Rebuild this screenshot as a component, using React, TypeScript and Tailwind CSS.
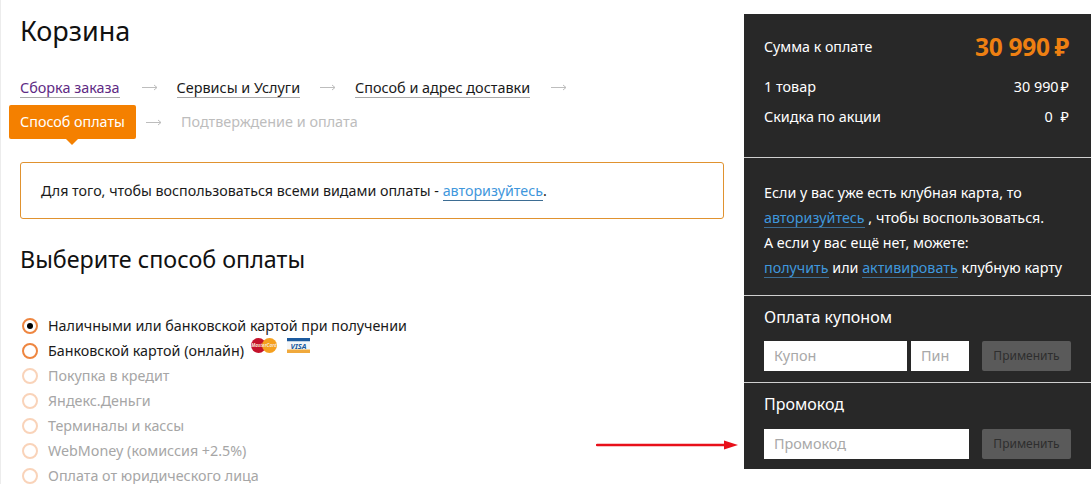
import { FC } from 'react';
import clsx from 'clsx';

const FONT = "font-['Noto_Sans',sans-serif]";

const methods = [
  { label: 'Наличными или банковской картой при получении', active: true, checked: true },
  { label: 'Банковской картой (онлайн)', active: true, cards: true },
  { label: 'Покупка в кредит' },
  { label: 'Яндекс.Деньги' },
  { label: 'Терминалы и кассы' },
  { label: 'WebMoney (комиссия +2.5%)' },
  { label: 'Оплата от юридического лица' },
];

const StepArrow: FC<{ className?: string }> = ({ className }) => (
  <svg width="16" height="7" viewBox="0 0 16 7" fill="none" className={clsx('shrink-0', className)}>
    <path d="M0 3.5H15M12 1l3 2.5L12 6" stroke="#bdbdbd" strokeWidth="1" />
  </svg>
);

const Step: FC<{ label: string; className?: string }> = ({ label, className }) => (
  <a className={clsx('border-b border-[#a9a9a9] text-[14.4px] leading-[19px]', className)}>{label}</a>
);

const Cards = () => (
  <span className="ml-[7px] flex items-start gap-[10px] self-start">
    <svg width="26" height="15" viewBox="0 0 26 15">
      <circle cx="7.5" cy="7.5" r="7.5" fill="#c4122b" />
      <circle cx="18.5" cy="7.5" r="7.5" fill="#f5a01f" />
      <text x="13" y="9.2" textAnchor="middle" fontSize="4.6" fontStyle="italic" fontWeight="700" fill="#f6e3d2">
        MasterCard
      </text>
    </svg>
    <svg width="23" height="15" viewBox="0 0 23 15">
      <rect width="23" height="3.5" fill="#1c5a9e" />
      <rect y="3.5" width="23" height="8" fill="#f4f6f8" />
      <rect y="11.5" width="23" height="3.5" fill="#f0a93c" />
      <text x="11.5" y="10.5" textAnchor="middle" fontSize="7.5" fontStyle="italic" fontWeight="700" fill="#1c5a9e">
        VISA
      </text>
    </svg>
  </span>
);

const PaymentOption: FC<{ label: string; active?: boolean; checked?: boolean; cards?: boolean }> = ({
  label,
  active,
  checked,
  cards,
}) => (
  <div className="flex h-[25px] items-center">
    <span
      className={clsx(
        'ml-[2px] mr-[10px] flex h-4 w-4 shrink-0 items-center justify-center rounded-full border-2',
        active ? 'border-[#ee8640]' : 'border-[#f9d3b9]',
      )}
    >
      {checked && <span className="h-[6px] w-[6px] rounded-full bg-black" />}
    </span>
    <span className={clsx('text-[14.3px]', active ? 'text-[#1a1a1a]' : 'text-[#a6a6a6]')}>{label}</span>
    {cards && <Cards />}
  </div>
);

const ApplyButton = () => (
  <button className="ml-[13px] h-[30px] w-[89px] rounded-[2px] bg-[#5a5a5a] text-[12px] text-[#2e2e2e]">Применить</button>
);

const Field: FC<{ placeholder: string; className: string }> = ({ placeholder, className }) => (
  <div className={clsx('flex h-[30px] items-center bg-white pl-[10px] text-[14.4px] text-[#a8a8a8]', className)}>{placeholder}</div>
);

const Row: FC<{ label: string; value: string; gap: string }> = ({ label, value, gap }) => (
  <div className="flex h-[30px] items-center justify-between text-[14.4px] text-white">
    <span>{label}</span>
    <span className="flex items-center">
      {value}
      <span className={gap}>₽</span>
    </span>
  </div>
);

const Link: FC<{ label: string }> = ({ label }) => (
  <a className="border-b border-[#3d6d93] text-[#3f97dc]">{label}</a>
);

export default function App() {
  return (
    <div className={clsx('relative flex h-[484px] w-[1091px] overflow-hidden bg-white text-[#1a1a1a]', FONT)}>
      <main className="w-[744px] shrink-0 border-l border-[#ececec] pr-5">
        <h1 className="ml-[19px] mt-[12px] text-[27px] font-normal leading-[38px] text-[#111]">Корзина</h1>

        <div className="ml-[19px] mt-[28px] flex h-[19px] items-center">
          <Step label="Сборка заказа" className="text-[#5e2a84]" />
          <StepArrow className="ml-[22px] mr-[19px]" />
          <Step label="Сервисы и Услуги" />
          <StepArrow className="ml-[20px] mr-[19px]" />
          <Step label="Способ и адрес доставки" />
          <StepArrow className="ml-[21px]" />
        </div>

        <div className="ml-2 mt-[8px] flex h-[34px] items-center">
          <div className="relative flex h-[34px] w-[127px] items-center justify-center rounded-[2px] bg-[#f48000] text-[14.3px] text-white">
            Способ оплаты
            <span className="absolute left-[57px] top-[34px] h-0 w-0 border-x-[6px] border-t-[6px] border-x-transparent border-t-[#f48000]" />
          </div>
          <StepArrow className="ml-[10px] mr-[19px]" />
          <span className="text-[14.4px] text-[#bdbdbd]">Подтверждение и оплата</span>
        </div>

        <div className="ml-[19px] mt-[23px] flex h-[57px] items-center rounded-[3px] border border-[#e0922f] pl-5 text-[14.25px]">
          <span>
            Для того, чтобы воспользоваться всеми видами оплаты - <Link label="авторизуйтесь" />.
          </span>
        </div>

        <h2 className="ml-[19px] mt-[23px] text-[23.3px] font-normal leading-[34px] text-[#111]">Выберите способ оплаты</h2>

        <div className="ml-[19px] mt-[37px]">
          {methods.map((m) => (
            <PaymentOption key={m.label} {...m} />
          ))}
        </div>
      </main>

      <aside className="mt-[14px] h-[455px] w-[347px] shrink-0 bg-[#282828] text-white">
        <section className="h-[144px] border-b border-[#cfcfcf] pl-5 pr-[22px] pt-[18px]">
          <div className="flex h-[30px] items-center justify-between text-[14.2px]">
            <span>Сумма к оплате</span>
            <span className="flex items-center text-[24.5px] font-bold tracking-[-0.3px] text-[#ee8012]">
              30 990<span className="ml-[5px]">₽</span>
            </span>
          </div>
          <div className="mt-[10px]">
            <Row label="1 товар" value="30 990" gap="ml-[2px]" />
            <Row label="Скидка по акции" value="0" gap="ml-[8px]" />
          </div>
        </section>

        <section className="h-[138px] border-b border-[#cfcfcf] pl-5 pt-[22px] text-[14.3px] leading-[25px]">
          <p>Если у вас уже есть клубная карта, то</p>
          <p>
            <Link label="авторизуйтесь" /> , чтобы воспользоваться.
          </p>
          <p>А если у вас ещё нет, можете:</p>
          <p>
            <Link label="получить" /> или <Link label="активировать" /> клубную карту
          </p>
        </section>

        <section className="h-[87px] border-b border-[#cfcfcf] pl-5 pt-[8px]">
          <h3 className="text-[16px] font-normal leading-[26px]">Оплата купоном</h3>
          <div className="mt-[11px] flex">
            <Field placeholder="Купон" className="w-[143px]" />
            <Field placeholder="Пин" className="ml-[4px] w-[58px]" />
            <ApplyButton />
          </div>
        </section>

        <section className="pl-5 pt-[8px]">
          <h3 className="text-[16px] font-normal leading-[26px]">Промокод</h3>
          <div className="mt-[12px] flex">
            <Field placeholder="Промокод" className="w-[205px]" />
            <ApplyButton />
          </div>
        </section>
      </aside>

      <svg width="142" height="10" viewBox="0 0 142 10" className="absolute left-[596px] top-[440px]">
        <path d="M1 5H130" stroke="#e8101a" strokeWidth="2.5" strokeLinecap="round" />
        <path d="M128 0.5L142 5L128 9.5Z" fill="#e8101a" />
      </svg>
    </div>
  );
}
